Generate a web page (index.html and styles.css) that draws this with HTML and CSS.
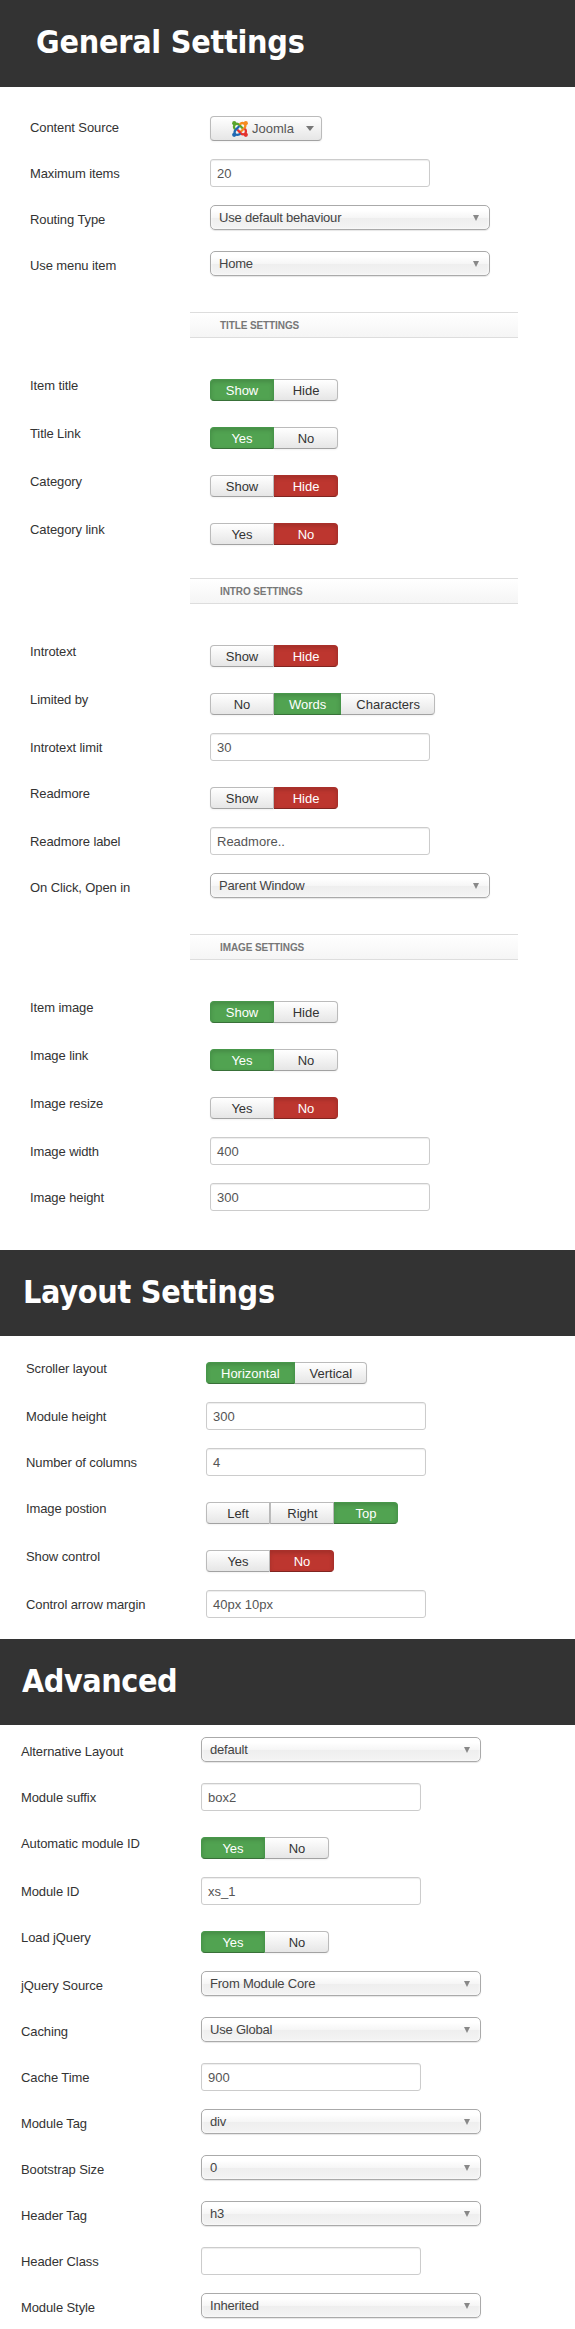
FILE: index.html
```html
<!DOCTYPE html>
<html lang="en">
<head>
<meta charset="utf-8">
<title>Module Settings</title>
<link rel="stylesheet" href="styles.css">
</head>
<body>
<section class="panel general">
  <h1 class="panel-title">General Settings</h1>
  <div class="fields">
    <div class="row"><span class="label">Content Source</span>
      <div class="source">
        <svg class="joomla" viewBox="0 0 16 16" fill="none" stroke-width="2.3" stroke-linecap="round" stroke-linejoin="round">
          <path stroke="#5aa52c" d="M2.6 7.6C1.7 6.2 2 4.600 2.800 3.600C4.600 2 6.200 2.800 7.400 4L10.300 7"/>
          <path stroke="#f68b1f" d="M8.400 2.800C10 1.800 11.800 2 12.800 3.200C14 4.800 13.200 6.300 12 7.500L9.200 10.300"/>
          <path stroke="#e5322d" d="M13.300 8.400C14.200 10 14 11.500 13 12.600C11.400 14 9.800 13.300 8.600 12.100L6 9.300"/>
          <path stroke="#1f68b2" d="M7.600 13.300C6 14.100 4.200 14 3.200 12.900C1.900 11.300 2.700 9.800 3.900 8.600L6.700 5.800"/>
          <g stroke="none"><circle cx="2.200" cy="2.200" r="2.100" fill="#5aa52c"/><circle cx="13.800" cy="2.200" r="2.100" fill="#f68b1f"/><circle cx="13.800" cy="13.800" r="2.100" fill="#e5322d"/><circle cx="2.200" cy="13.800" r="2.100" fill="#1f68b2"/></g>
        </svg>
        <span>Joomla</span><i class="caret"></i>
      </div></div>
    <div class="row"><span class="label">Maximum items</span><div class="input">20</div></div>
    <div class="row"><span class="label">Routing Type</span><div class="select"><span>Use default behaviour</span><i class="arrow"></i></div></div>
    <div class="row"><span class="label">Use menu item</span><div class="select"><span>Home</span><i class="arrow"></i></div></div>
    <h2 class="bar">Title Settings</h2>
    <div class="row tall"><span class="label">Item title</span><div class="group"><span class="btn yes">Show</span><span class="btn">Hide</span></div></div>
    <div class="row tall"><span class="label">Title Link</span><div class="group"><span class="btn yes">Yes</span><span class="btn">No</span></div></div>
    <div class="row tall"><span class="label">Category</span><div class="group"><span class="btn">Show</span><span class="btn no">Hide</span></div></div>
    <div class="row tall"><span class="label">Category link</span><div class="group"><span class="btn">Yes</span><span class="btn no">No</span></div></div>
    <h2 class="bar">Intro Settings</h2>
    <div class="row tall"><span class="label">Introtext</span><div class="group"><span class="btn">Show</span><span class="btn no">Hide</span></div></div>
    <div class="row tall"><span class="label">Limited by</span><div class="group"><span class="btn">No</span><span class="btn yes">Words</span><span class="btn">Characters</span></div></div>
    <div class="row"><span class="label">Introtext limit</span><div class="input">30</div></div>
    <div class="row tall"><span class="label">Readmore</span><div class="group"><span class="btn">Show</span><span class="btn no">Hide</span></div></div>
    <div class="row"><span class="label">Readmore label</span><div class="input">Readmore..</div></div>
    <div class="row"><span class="label">On Click, Open in</span><div class="select"><span>Parent Window</span><i class="arrow"></i></div></div>
    <h2 class="bar">Image Settings</h2>
    <div class="row tall"><span class="label">Item image</span><div class="group"><span class="btn yes">Show</span><span class="btn">Hide</span></div></div>
    <div class="row tall"><span class="label">Image link</span><div class="group"><span class="btn yes">Yes</span><span class="btn">No</span></div></div>
    <div class="row tall"><span class="label">Image resize</span><div class="group"><span class="btn">Yes</span><span class="btn no">No</span></div></div>
    <div class="row"><span class="label">Image width</span><div class="input">400</div></div>
    <div class="row"><span class="label">Image height</span><div class="input">300</div></div>
  </div>
</section>
<section class="panel layout">
  <h1 class="panel-title">Layout Settings</h1>
  <div class="fields">
    <div class="row tall"><span class="label">Scroller layout</span><div class="group"><span class="btn yes">Horizontal</span><span class="btn">Vertical</span></div></div>
    <div class="row"><span class="label">Module height</span><div class="input">300</div></div>
    <div class="row"><span class="label">Number of columns</span><div class="input">4</div></div>
    <div class="row tall"><span class="label">Image postion</span><div class="group"><span class="btn">Left</span><span class="btn">Right</span><span class="btn yes">Top</span></div></div>
    <div class="row tall"><span class="label">Show control</span><div class="group"><span class="btn">Yes</span><span class="btn no">No</span></div></div>
    <div class="row"><span class="label">Control arrow margin</span><div class="input">40px 10px</div></div>
  </div>
</section>
<section class="panel advanced">
  <h1 class="panel-title">Advanced</h1>
  <div class="fields">
    <div class="row"><span class="label">Alternative Layout</span><div class="select"><span>default</span><i class="arrow"></i></div></div>
    <div class="row"><span class="label">Module suffix</span><div class="input">box2</div></div>
    <div class="row tall"><span class="label">Automatic module ID</span><div class="group"><span class="btn yes">Yes</span><span class="btn">No</span></div></div>
    <div class="row"><span class="label">Module ID</span><div class="input">xs_1</div></div>
    <div class="row tall"><span class="label">Load jQuery</span><div class="group"><span class="btn yes">Yes</span><span class="btn">No</span></div></div>
    <div class="row"><span class="label">jQuery Source</span><div class="select"><span>From Module Core</span><i class="arrow"></i></div></div>
    <div class="row"><span class="label">Caching</span><div class="select"><span>Use Global</span><i class="arrow"></i></div></div>
    <div class="row"><span class="label">Cache Time</span><div class="input">900</div></div>
    <div class="row"><span class="label">Module Tag</span><div class="select"><span>div</span><i class="arrow"></i></div></div>
    <div class="row"><span class="label">Bootstrap Size</span><div class="select"><span>0</span><i class="arrow"></i></div></div>
    <div class="row"><span class="label">Header Tag</span><div class="select"><span>h3</span><i class="arrow"></i></div></div>
    <div class="row"><span class="label">Header Class</span><div class="input"></div></div>
    <div class="row"><span class="label">Module Style</span><div class="select"><span>Inherited</span><i class="arrow"></i></div></div>
  </div>
</section>
</body>
</html>
```
FILE: styles.css
```css
* { box-sizing: border-box; }
body {
  margin: 0;
  background: #fff;
  color: #333;
  font: 13px/18px "Liberation Sans", Arial, sans-serif;
}
.panel-title {
  margin: 0;
  height: 86px;
  padding-top: 22px;
  background: #333;
  color: #fff;
  font: bold 32px/40px "DejaVu Sans Condensed", "DejaVu Sans", sans-serif;
  font-stretch: condensed;
  letter-spacing: -.25px;
  white-space: nowrap;
}
.general .panel-title { height: 87px; padding-left: 36px; }
.layout .panel-title { padding-left: 23px; }
.advanced .panel-title { padding-left: 22px; letter-spacing: -.45px; }

.general .fields { height: 1163px; padding: 26px 0 0 30px; }
.layout .fields { height: 303px; padding: 18px 0 0 26px; }
.advanced .fields { height: 604px; padding: 12px 0 0 21px; }

.row { display: flex; align-items: flex-start; height: 46px; }
.row.tall { height: 48px; }
.label { flex: none; width: 180px; padding-top: 6px; letter-spacing: -.1px; }

.input {
  width: 220px;
  height: 28px;
  padding: 5px 6px 3px;
  border: 1px solid #ccc;
  border-radius: 3px;
  box-shadow: inset 0 1px 1px rgba(0, 0, 0, .075);
  color: #555;
}
.select, .source {
  display: flex;
  align-items: center;
  height: 25px;
  border: 1px solid #aaa;
  color: #444;
}
.select {
  width: 280px;
  padding: 1px 10px 0 8px;
  justify-content: space-between;
  border-radius: 5px;
  background: linear-gradient(#fff 20%, #f6f6f6 50%, #eee 52%, #f4f4f4 100%);
  box-shadow: inset 0 0 3px #fff, 0 1px 1px rgba(0, 0, 0, .1);
  letter-spacing: -.2px;
}
.arrow {
  border: 3px solid transparent;
  border-top: 6px solid #888;
  border-bottom: 0;
}
.source {
  width: 112px;
  margin-top: 3px;
  padding: 0 7px 0 21px;
  border-color: #bbb;
  border-bottom-color: #a2a2a2;
  border-radius: 4px;
  background: linear-gradient(#fff, #e6e6e6);
  box-shadow: 0 1px 2px rgba(0, 0, 0, .05);
  color: #555;
}
.joomla { width: 16px; height: 16px; margin-right: 4px; }
.caret {
  margin-left: auto;
  border: 4px solid transparent;
  border-top: 5px solid #777;
  border-bottom: 0;
}

.group { display: flex; margin-top: 8px; }
.btn {
  min-width: 64px;
  height: 22px;
  padding: 2px 14px 0;
  border: 1px solid #bbb;
  border-bottom-color: #a2a2a2;
  background: linear-gradient(#fff, #e6e6e6);
  box-shadow: 0 1px 2px rgba(0, 0, 0, .05);
  text-align: center;
}
.btn + .btn { border-left-width: 0; padding-left: 15px; }
.btn:not(.yes):not(.no) + .btn:not(.yes):not(.no) { border-left-width: 1px; }
.btn:first-child { border-radius: 4px 0 0 4px; }
.btn:last-child { border-radius: 0 4px 4px 0; }
.btn.yes, .btn.no {
  color: #fff;
  box-shadow: inset 0 2px 4px rgba(0, 0, 0, .15);
}
.btn.yes { background: #51a351; border-color: #47974a #47974a #387038; }
.btn.no { background: #bd362f; border-color: #a9302b #a9302b #802420; }

.bar {
  width: 328px;
  height: 26px;
  margin: 15px 0 33px 160px;
  padding: 4px 30px;
  border: solid #ddd;
  border-width: 1px 0;
  background: linear-gradient(#fff, #f5f5f5);
  color: #777;
  font-size: 10px;
  line-height: 17px;
  letter-spacing: -.1px;
  text-transform: uppercase;
}
```
